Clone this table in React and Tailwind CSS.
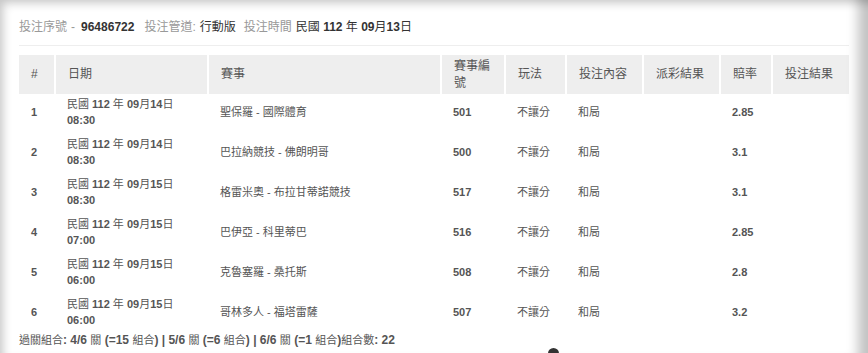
import React from "react";

const CJK = /([\u3000-\u9fff\uff00-\uffef]+)/;

// digits stay bold, CJK runs fall back to regular weight like the original page
const Mixed = ({ text, size = "" }) =>
  text.split(CJK).map((part, i) =>
    CJK.test(part) ? (
      <span key={i} className={`font-normal ${size}`}>
        {part}
      </span>
    ) : (
      <React.Fragment key={i}>{part}</React.Fragment>
    )
  );

const columns = [
  { label: "#", width: "w-[36px]" },
  { label: "日期", width: "w-[153px]" },
  { label: "賽事", width: "w-[233px]" },
  { label: "賽事編號", width: "w-[64px]" },
  { label: "玩法", width: "w-[61px]" },
  { label: "投注內容", width: "w-[77px]" },
  { label: "派彩結果", width: "w-[77px]" },
  { label: "賠率", width: "w-[52px]" },
  { label: "投注結果", width: "w-[77px]" },
];

const bets = [
  { date: "民國 112 年 09月14日", time: "08:30", match: "聖保羅 - 國際體育", no: "501", odds: "2.85" },
  { date: "民國 112 年 09月14日", time: "08:30", match: "巴拉納競技 - 佛朗明哥", no: "500", odds: "3.1" },
  { date: "民國 112 年 09月15日", time: "08:30", match: "格雷米奧 - 布拉甘蒂諾競技", no: "517", odds: "3.1" },
  { date: "民國 112 年 09月15日", time: "07:00", match: "巴伊亞 - 科里蒂巴", no: "516", odds: "2.85" },
  { date: "民國 112 年 09月15日", time: "06:00", match: "克魯塞羅 - 桑托斯", no: "508", odds: "2.8" },
  { date: "民國 112 年 09月15日", time: "06:00", match: "哥林多人 - 福塔雷薩", no: "507", odds: "3.2" },
];

const cell = "pl-3 pr-2 pt-[2px] pb-[6px] align-middle";

export default function App() {
  return (
    <div
      className="relative w-[868px] h-[353px] overflow-hidden bg-white text-[#555]"
      style={{ fontFamily: '"Liberation Sans", Arial, "Noto Sans CJK TC", sans-serif' }}
    >
      {/* modal edge shading */}
      <div className="pointer-events-none absolute inset-0 shadow-[inset_9px_9px_10px_-6px_rgba(0,0,0,0.22),inset_-20px_0_12px_-10px_rgba(0,0,0,0.24)]" />

      <div className="pl-[19px] pr-[19px] pt-[19px]">
        <div className="flex items-center gap-[4px] text-[12px] leading-4">
          <span className="text-[#999]">投注序號</span>
          <span className="text-[#999]">-</span>
          <span className="ml-[2px] font-bold text-[#333]">96486722</span>
          <span className="ml-[6px] text-[#999]">投注管道:</span>
          <span className="text-[#333]">行動版</span>
          <span className="ml-[4px] text-[#999]">投注時間</span>
          <span className="font-bold text-[#333]">
            <Mixed text="民國 112 年 09月13日" />
          </span>
        </div>

        <div className="mt-[10px] mb-[9px] h-px bg-[#eee]" />

        <table className="w-[830px] table-fixed border-collapse">
          <thead>
            <tr className="h-[39px] bg-[#eee] text-[12px] leading-[17px] text-[#555]">
              {columns.map((c, i) => (
                <th
                  key={c.label}
                  className={`${c.width} ${i > 0 ? "border-l-2 border-white" : ""} px-3 text-left font-normal align-middle`}
                >
                  {c.label}
                </th>
              ))}
            </tr>
          </thead>
          <tbody className="text-[11px] leading-4">
            {bets.map((b, i) => (
              <tr key={i} className="h-10">
                <td className={`${cell} font-bold`}>{i + 1}</td>
                <td className={`${cell} font-bold`}>
                  <div>
                    <Mixed text={b.date} />
                  </div>
                  <div>{b.time}</div>
                </td>
                <td className={cell}>{b.match}</td>
                <td className={`${cell} font-bold`}>{b.no}</td>
                <td className={cell}>不讓分</td>
                <td className={cell}>和局</td>
                <td className={cell}></td>
                <td className={`${cell} font-bold`}>{b.odds}</td>
                <td className={cell}></td>
              </tr>
            ))}
          </tbody>
        </table>

        <p className="text-[12px] leading-[12px] font-bold">
          <Mixed
            text="過關組合: 4/6 關 (=15 組合) | 5/6 關 (=6 組合) | 6/6 關 (=1 組合)組合數: 22"
            size="text-[11px]"
          />
        </p>
      </div>

      <div className="absolute left-[548px] top-[348px] h-[11px] w-[11px] rounded-full bg-[#333]" />
    </div>
  );
}
